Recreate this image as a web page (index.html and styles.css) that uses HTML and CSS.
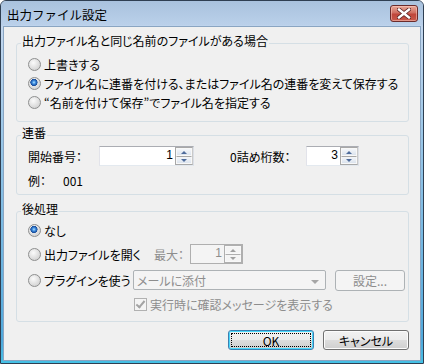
FILE: index.html
```html
<!DOCTYPE html>
<html lang="ja">
<head>
    <meta charset="UTF-8">
    <title>出力ファイル設定</title>
    <link rel="stylesheet" href="styles.css">
</head>
<body>

<div class="window">
    <div class="titlebar">
        <span class="title">出力ファイル設定</span>
        <span class="close">
            <svg width="14" height="11" viewBox="0 0 14 11">
                <path d="M2 1.5 L12 9.5 M12 1.5 L2 9.5" stroke="#5a2323" stroke-width="4" stroke-linecap="square"/>
                <path d="M2 1.5 L12 9.5 M12 1.5 L2 9.5" stroke="#ffffff" stroke-width="2.4" stroke-linecap="square"/>
            </svg>
        </span>
    </div>

    <div class="client">
        <fieldset class="group g-exist">
            <legend>出力ファイル名と同じ名前のファイルがある場合</legend>
            <div class="opt"><span class="radio"></span>上書きする</div>
            <div class="opt"><span class="radio on"></span>ファイル名に連番を付ける、またはファイル名の連番を変えて保存する</div>
            <div class="opt"><span class="radio"></span>“名前を付けて保存”でファイル名を指定する</div>
        </fieldset>

        <fieldset class="group g-serial">
            <legend>連番</legend>
            <div class="row">
                <span class="lbl w-start">開始番号：</span>
                <div class="spin w-start-box">
                    <span class="val">1</span>
                    <span class="arrows"><span class="up"></span><span class="dn"></span></span>
                </div>
                <span class="lbl w-digits">0詰め桁数：</span>
                <div class="spin w-small">
                    <span class="val">3</span>
                    <span class="arrows"><span class="up"></span><span class="dn"></span></span>
                </div>
            </div>
            <div class="row sample">
                <span class="lbl w-ex">例：</span>
                <span>001</span>
            </div>
        </fieldset>

        <fieldset class="group g-post">
            <legend>後処理</legend>
            <div class="opt"><span class="radio on"></span>なし</div>
            <div class="row r-open">
                <span class="opt w-open"><span class="radio"></span>出力ファイルを開く</span>
                <span class="lbl w-max off">最大：</span>
                <div class="spin w-small disabled">
                    <span class="val">1</span>
                    <span class="arrows"><span class="up"></span><span class="dn"></span></span>
                </div>
            </div>
            <div class="row r-plugin">
                <span class="opt w-plugin"><span class="radio"></span>プラグインを使う</span>
                <div class="combo">
                    <span>メールに添付</span>
                    <span class="drop"></span>
                </div>
                <span class="btn flat">設定...</span>
            </div>
            <div class="row r-check">
                <span class="check"></span>
                <span class="off">実行時に確認メッセージを表示する</span>
            </div>
        </fieldset>

        <div class="buttons">
            <span class="btn default">OK</span>
            <span class="btn">キャンセル</span>
        </div>
    </div>
</div>

</body>
</html>
```

FILE: styles.css
```css
* {
    box-sizing: border-box;
}

body {
    margin: 0;
    font-family: "Noto Sans CJK JP", "Noto Sans", sans-serif;
    font-size: 12px;
    font-feature-settings: "palt";
    color: #000;
    background: #fff;
}

.window {
    width: 424px;
    height: 364px;
    border: 1px solid #2f3f52;
    border-radius: 6px 6px 0 0;
    background: linear-gradient(#a8c1dd, #bcd2eb 24px, #c3d7ee 26px, #4fa9dc 340px, #44c1e6);
    display: flex;
    flex-direction: column;
}

/* Title bar */
.titlebar {
    height: 24px;
    display: flex;
    align-items: center;
    justify-content: space-between;
    padding: 0 5px 0 6px;
    background: linear-gradient(#a9c2de, #bad0ea);
    border-radius: 5px 5px 0 0;
}

.title {
    font-size: 12.5px;
    font-feature-settings: normal;
    color: #000;
    padding-top: 3px;
}

.close {
    width: 28px;
    height: 17px;
    border: 1px solid #6b2b2b;
    border-radius: 3px;
    background: linear-gradient(#e9a999, #d06f62 45%, #c0463b 55%, #c85a4c);
    box-shadow: inset 0 0 0 1px rgba(255, 210, 200, 0.5);
    display: flex;
    align-items: center;
    justify-content: center;
}

/* Client area */
.client {
    flex: 1;
    margin: 1px 2px 2px 2px;
    background: #f0f0f0;
    border: 1px solid #8aa5c2;
    padding: 7px 11px 0 12px;
}

.group {
    margin: 0;
    padding: 3px 0 9px 0;
    border: 1px solid #d5dfe5;
    border-radius: 3px;
    min-width: 0;
}

.group legend {
    margin-left: 4px;
    padding: 0 1px 4px;
    line-height: 14px;
}

.g-serial {
    margin-top: 4px;
    padding: 2px 0 4px 0;
}

.g-post {
    margin-top: 7px;
    padding: 0 0 8px 0;
}

.opt {
    display: flex;
    align-items: center;
    height: 19px;
    padding-left: 11px;
    white-space: nowrap;
}

.g-post > .opt {
    height: 20px;
}

.row {
    display: flex;
    align-items: center;
    padding-left: 11px;
    white-space: nowrap;
}

.row .opt {
    padding-left: 0;
}

.lbl {
    flex: none;
}

.w-start { width: 71px; }
.w-start-box { width: 95px; }
.w-digits { width: 76px; margin-left: 36px; }
.w-small { width: 53px; }
.w-ex { width: 35px; }
.w-open { width: 126px; }
.w-max { width: 36px; }
.w-plugin { width: 105px; }

.sample {
    height: 19px;
    margin-top: 5px;
}

.r-open {
    height: 20px;
    margin-top: 4px;
}

.r-plugin {
    height: 20px;
    margin-top: 6px;
}

.r-check {
    height: 18px;
    margin-top: 5px;
    padding-left: 117px;
}

.off {
    color: #8d8d8d;
}

/* Radio buttons */
.radio {
    flex: none;
    width: 13px;
    height: 13px;
    margin-right: 3px;
    border-radius: 50%;
    border: 1px solid #8e8f8f;
    background: radial-gradient(circle at 40% 35%, #fbfbfb, #dcdcdc 60%, #c9c9c9);
}

.radio.on {
    background:
        radial-gradient(circle at 45% 40%, #b8e4ff 0, #3d8ee0 1.6px, #1b4f9e 3.2px, #1b4f9e 3.4px, transparent 3.8px),
        radial-gradient(circle at 40% 35%, #fbfbfb, #dcdcdc 60%, #c9c9c9);
}

/* Spin boxes */
.spin {
    flex: none;
    height: 20px;
    display: flex;
    justify-content: flex-end;
    align-items: stretch;
    background: #fff;
    border: 1px solid;
    border-color: #abadb3 #dbdfe6 #e3e9ef #e2e3ea;
}

.spin .val {
    line-height: 17px;
    padding-right: 2px;
    font-family: "Liberation Sans", sans-serif;
    font-size: 12px;
}

.arrows {
    width: 18px;
    display: flex;
    flex-direction: column;
    border: 1px solid #a8a8a8;
    border-right-color: #c9c9c9;
}

.arrows span {
    flex: 1;
    display: flex;
    align-items: center;
    justify-content: center;
    background: linear-gradient(#f4f6f9, #dce4ee);
    border: 1px solid #f8f8f8;
}

.arrows .up::before,
.arrows .dn::before {
    content: "";
    border-left: 3.5px solid transparent;
    border-right: 3.5px solid transparent;
}

.arrows .up::before {
    border-bottom: 3.5px solid #4f6c9c;
}

.arrows .dn::before {
    border-top: 3.5px solid #4f6c9c;
}

.arrows .dn {
    border-top-color: #a8a8a8;
}

.spin.disabled {
    background: #f4f4f4;
    border-color: #afafaf;
    color: #8d8d8d;
}

.spin.disabled .arrows {
    border-color: #afafaf;
}

.spin.disabled .arrows span {
    background: #f4f4f4;
}

.spin.disabled .arrows .dn {
    border-top-color: #afafaf;
}

.spin.disabled .arrows .up::before {
    border-bottom-color: #a0a0a0;
}

.spin.disabled .arrows .dn::before {
    border-top-color: #a0a0a0;
}

/* Combo box */
.combo {
    width: 193px;
    height: 20px;
    flex: none;
    display: flex;
    align-items: center;
    justify-content: space-between;
    padding: 0 6px 0 3px;
    border: 1px solid #adb2b5;
    border-radius: 2px;
    background: #f4f4f4;
    color: #8d8d8d;
}

.drop {
    border-left: 4px solid transparent;
    border-right: 4px solid transparent;
    border-top: 4px solid #a6a6a6;
    margin-top: 3px;
}

/* Check box */
.check {
    flex: none;
    width: 13px;
    height: 13px;
    margin-right: 3px;
    border: 1px solid #b1b1b1;
    background: #f4f4f4;
    position: relative;
}

.check::after {
    content: "";
    position: absolute;
    left: 3px;
    top: 0px;
    width: 3px;
    height: 7px;
    border: solid #a3a3a3;
    border-width: 0 2px 2px 0;
    transform: rotate(40deg);
}

/* Buttons */
.btn {
    flex: none;
    display: flex;
    align-items: center;
    justify-content: center;
    width: 86px;
    height: 20px;
    border: 1px solid #707070;
    border-radius: 3px;
    background: linear-gradient(#f2f2f2, #ebebeb 50%, #dddddd 50%, #cfcfcf);
    box-shadow: inset 0 0 0 1px #fcfcfc;
}

.btn.flat {
    width: 70px;
    height: 21px;
    margin-left: 9px;
    border-color: #adb2b5;
    background: #f4f4f4;
    box-shadow: none;
    color: #8d8d8d;
}

.btn.default {
    border-color: #3c7fb1;
    box-shadow: inset 0 0 0 1px #48d7fb;
    position: relative;
}

.btn.default::after {
    content: "";
    position: absolute;
    inset: 2px;
    border: 1px dotted #000;
}

.buttons {
    display: flex;
    justify-content: flex-end;
    gap: 9px;
    margin-top: 8px;
}
```
